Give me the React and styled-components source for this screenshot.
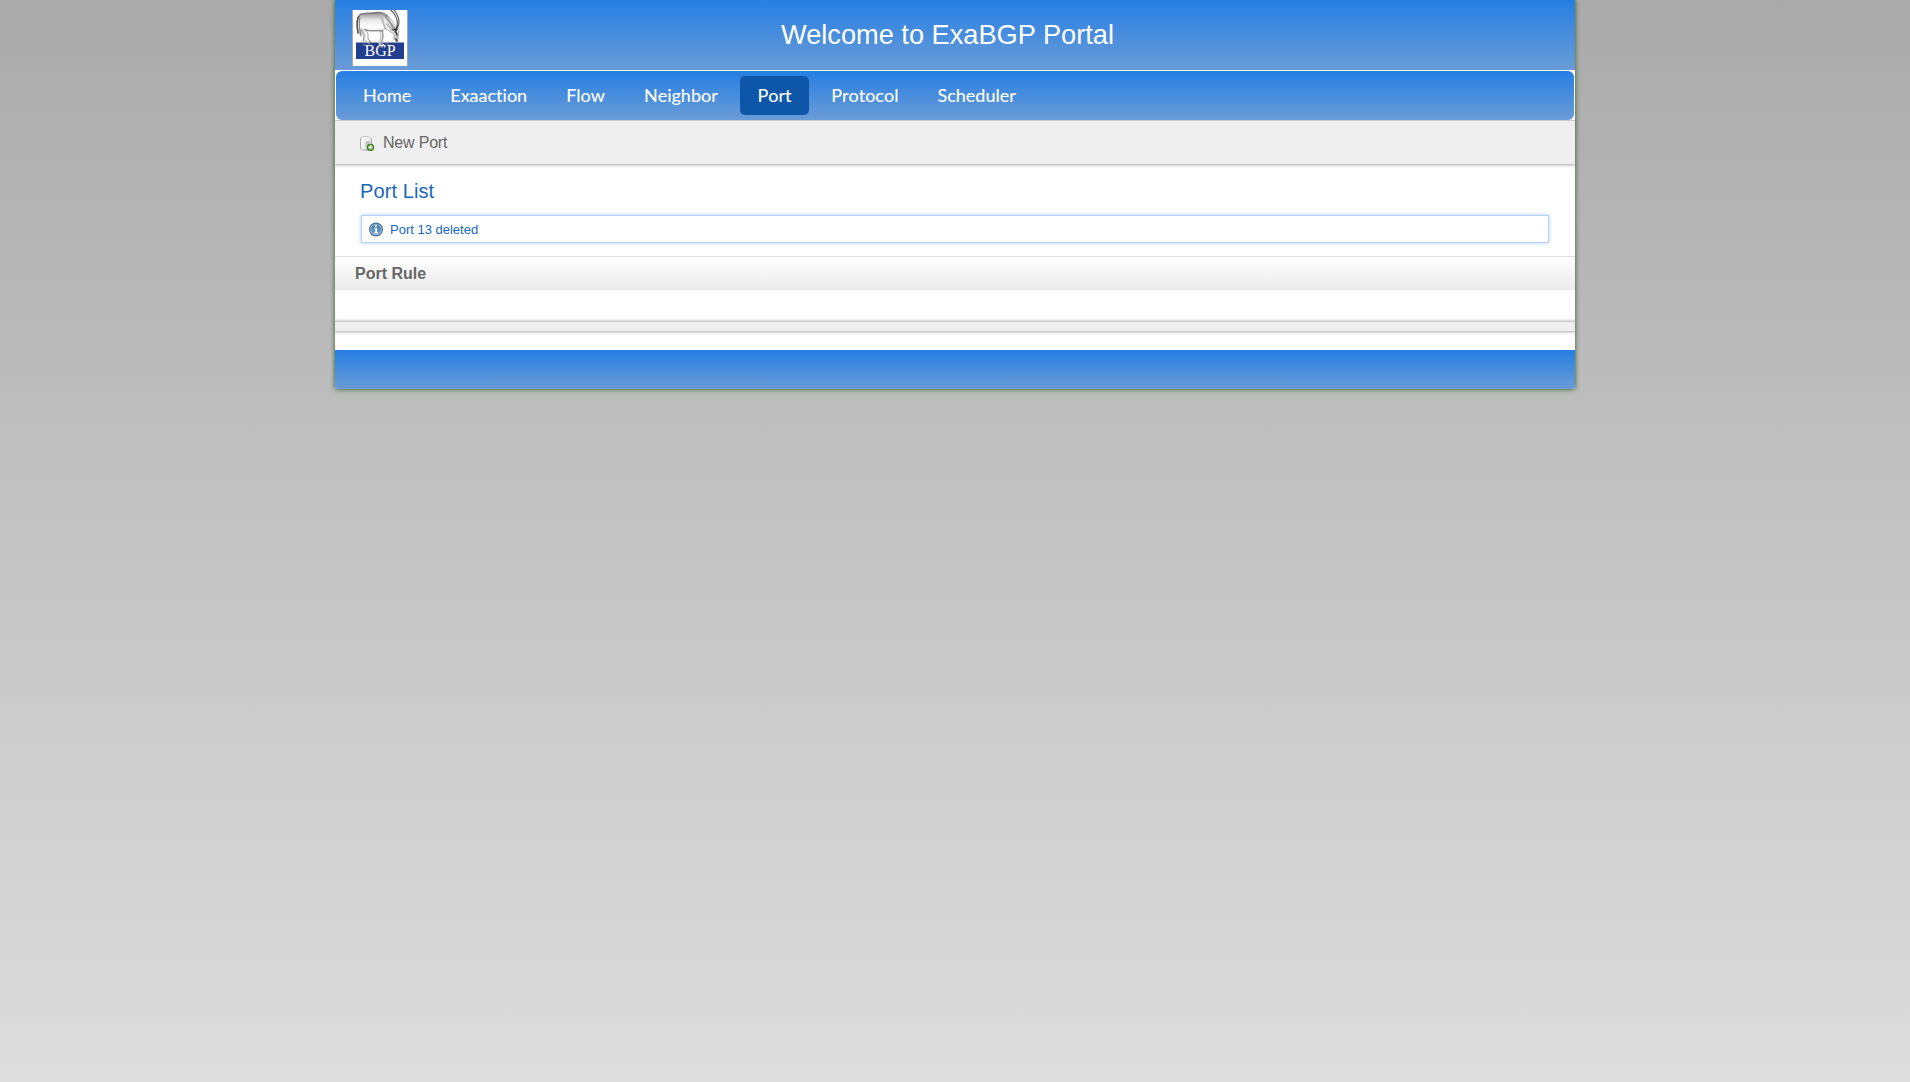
import React from "react";
import styled, { createGlobalStyle } from "styled-components";

const blue = "linear-gradient(to bottom, #267fe3 0%, #6a9bd6 100%)";

const GlobalStyle = createGlobalStyle`
  * { box-sizing: border-box; }
  html { min-height: 100%; background: #ddd linear-gradient(to bottom, #aaa 0%, #ddd 100%) no-repeat; }
  body { margin: 0; font-family: "Liberation Sans", Arial, sans-serif; color: #666; }
  html, body { height: 1082px; overflow: hidden; }
`;

const Page = styled.div`
  width: 1240px;
  margin: 0 auto;
  background: #fff;
  box-shadow: 0 0 5px #255b17;
  border-radius: 0 0 2px 2px;
`;

const Header = styled.header`
  display: grid;
  grid-template-columns: 73px 1fr;
  height: 70px;
  padding: 10px 0 0 17px;
  background: ${blue};
`;

const Title = styled.h1`
  margin: 9px 0 0;
  padding-left: 356px;
  font-size: 27.2px;
  line-height: 32px;
  font-weight: 400;
  color: #fff;
  white-space: nowrap;
`;

const Nav = styled.nav`
  display: flex;
  align-items: flex-start;
  gap: 5px;
  height: 49px;
  margin: 1px 1px 0;
  padding: 5px 0 0 10px;
  border-radius: 6px;
  background: ${blue};
`;

const NavItem = styled.a`
  height: 39px;
  padding: 0 ${(p) => (p.$active ? "17.7px" : "17px")};
  border-radius: 5px;
  background: ${(p) => (p.$active ? "#0e57a8" : "transparent")};
  color: #fff;
  font: 400 18px/39px Lato, sans-serif;
  font-kerning: none;
  font-variant-ligatures: none;
  -webkit-text-stroke: 0.1px #fff;
  text-decoration: none;
`;

const Toolbar = styled.div`
  display: flex;
  align-items: center;
  gap: 7px;
  height: 43px;
  margin-top: 1px;
  padding-left: 24px;
  background: #efefef;
  box-shadow: 0 0 3px 1px #aaa;
  clip-path: inset(-1px 0 -4px 0);
  font-size: 16px;
  letter-spacing: -0.2px;
`;

const Heading = styled.h2`
  margin: 0;
  padding: 15px 0 0 25px;
  height: 51px;
  font-size: 20px;
  line-height: 24px;
  font-weight: 400;
  letter-spacing: 0.1px;
  color: #1a66bb;
`;

const Message = styled.div`
  display: flex;
  align-items: center;
  gap: 6px;
  height: 28px;
  margin: 0 26px 13px;
  padding-left: 7px;
  border: 1px solid #b2d1ff;
  box-shadow: 0 0 4px #b2d1ff;
  font-size: 13px;
  color: #1a66bb;
`;

const TableHead = styled.div`
  height: 34px;
  padding-left: 20px;
  border-top: 1px solid #dfdfdf;
  background: linear-gradient(to bottom, #fff, #eaeaea);
  font-size: 16px;
  line-height: 33px;
  font-weight: 700;
`;

const Pagination = styled.div`
  height: 9px;
  margin: 32px 0 19px;
  background: #efefef;
  box-shadow: 0 0 3px 1px #aaa;
  clip-path: inset(-4px 0 -4px 0);
`;

const Footer = styled.footer`
  height: 39px;
  background: ${blue};
  border-radius: 0 0 2px 2px;
`;

const Logo = () => (
  <svg width="56" height="56" viewBox="0 0 56 56">
    <defs>
      <linearGradient id="coat" x1="0" y1="0" x2="0" y2="1">
        <stop offset="0" stopColor="#888" />
        <stop offset=".25" stopColor="#e6e6e6" />
        <stop offset=".5" stopColor="#fff" />
        <stop offset="1" stopColor="#aaa" />
      </linearGradient>
    </defs>
    <path d="M0 0H56V56H0Z" fill="#fff" />
    <path d="M.5 0V56M55.5 0V56" stroke="#a5a8ac" />
    <path d="M4 32.5H52V49H4Z" fill="#213e8f" />
    <g fill="none" strokeLinecap="round" strokeLinejoin="round">
      <path d="M6 8C8 2 15 3 21 3C28 1 34 3 38 8L44 17L47 21C46 25 47 29 45 32L42 29L42 24L37 21L33 18L30 21C25 20 18 22 13 19L10 23L8 25L7 21C4 17 4 12 6 8Z" fill="url(#coat)" stroke="#999" strokeWidth=".7" />
      <path d="M7 6C4 10 5 17 6 23" stroke="#555" strokeWidth="1.6" />
      <path d="M8 8C6 14 8 20 9 26" stroke="#888" strokeWidth="1.2" />
      <path d="M8 4.5C13 2.5 18 4 22 3C28 1.5 32 3 35 6" stroke="#777" strokeWidth="1.4" />
      <path d="M33 5C35 10 39 13 43 19M31 4C35 7 38 12 41 18" stroke="#999" strokeWidth="2" />
      <path d="M29 6C31 10 31 15 34 19M35 14L40 20" stroke="#bbb" strokeWidth="2" />
      <path d="M10 19L13 25L12 30L17 33M28 20L29 27L27 33L30 37M31 20L31 27L29 33L33 36" stroke="#ccc" strokeWidth="1.5" />
      <path d="M9 20L12 25L11 32L12 35M14 20L16 24L16 29L19 32M30 20L31 27L29 35" stroke="#777" strokeWidth=".7" />
      <path d="M13 20C19 22 25 20 30 21" stroke="#666" strokeWidth=".8" />
      <path d="M17 32L19 33M11 35L13 35M28 37L30 37M34 34L37 34" stroke="#777" strokeWidth="1.2" />
      <path d="M44 19C47 12 44 5 39 0M45 19C49 12 46 5 42 0" stroke="#555" strokeWidth="1.1" />
      <path d="M41 20L45 19L43 22M44 22L45 25M44 29L45 31" stroke="#333" strokeWidth="1.4" />
    </g>
    <text x="12.5" y="46" fill="#fff" fontFamily="Liberation Serif, serif" fontSize="16.5" textLength="31" lengthAdjust="spacingAndGlyphs">BGP</text>
  </svg>
);

const DatabaseIcon = () => (
  <svg width="17" height="16" viewBox="0 0 17 16">
    <defs>
      <linearGradient id="db">
        <stop stopColor="#fff" />
        <stop offset=".35" stopColor="#eee" />
        <stop offset=".65" stopColor="#bbb" />
        <stop offset="1" stopColor="#e5e5e5" />
      </linearGradient>
    </defs>
    <path d="M1.5 4C1.5 1 12.5 1 12.5 4V13C12.5 16 1.5 16 1.5 13Z" fill="url(#db)" stroke="#aaa" />
    <ellipse cx="7" cy="4" rx="4.7" ry="1.7" fill="#ececec" stroke="#fff" strokeWidth=".8" />
    <circle cx="11.5" cy="12.3" r="3.1" fill="#72b34b" stroke="#35751b" strokeWidth="1.1" />
    <path d="M11.5 10.3V14.3M9.5 12.3H13.5" stroke="#fff" strokeWidth="1.3" />
  </svg>
);

const InfoIcon = () => (
  <svg width="15" height="15" viewBox="0 0 15 15">
    <defs>
      <linearGradient id="info" x2="0" y2="1">
        <stop stopColor="#4379b5" />
        <stop offset="1" stopColor="#79a6d5" />
      </linearGradient>
    </defs>
    <circle cx="7" cy="7.5" r="6.4" fill="#b7cee7" stroke="#456c98" strokeWidth="1.2" />
    <circle cx="7" cy="7.5" r="5.1" fill="url(#info)" />
    <path d="M6 3.3H8V5H6ZM5.5 6H8V10H9V11.2H5.3V10H6.3V7.2H5.5Z" fill="#fff" />
  </svg>
);

const links = ["Home", "Exaaction", "Flow", "Neighbor", "Port", "Protocol", "Scheduler"];

export default function App() {
  return (
    <>
      <GlobalStyle />
      <Page>
        <Header>
          <Logo />
          <Title>Welcome to ExaBGP Portal</Title>
        </Header>
        <Nav>
          {links.map((name) => (
            <NavItem key={name} $active={name === "Port"}>{name}</NavItem>
          ))}
        </Nav>
        <Toolbar>
          <DatabaseIcon />
          <span>New Port</span>
        </Toolbar>
        <Heading>Port List</Heading>
        <Message>
          <InfoIcon />
          <span>Port 13 deleted</span>
        </Message>
        <TableHead>Port Rule</TableHead>
        <Pagination />
        <Footer />
      </Page>
    </>
  );
}
